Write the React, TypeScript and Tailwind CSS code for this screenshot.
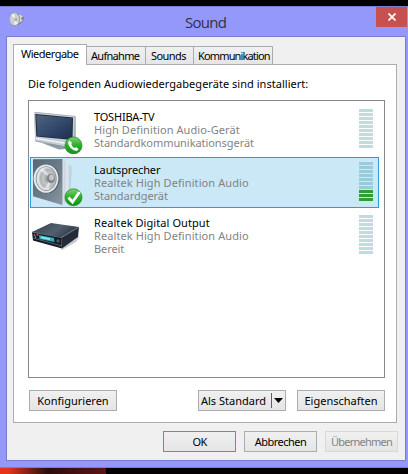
import React from 'react';

interface Device {
  name: string;
  description: string;
  status: string;
  spacing: string[];
  level: number;
  selected?: boolean;
  icon: React.ReactNode;
}

interface DialogButtonProps {
  className?: string;
  children: React.ReactNode;
}

const TitleIcon: React.FC = () => (
  <svg width="16" height="16" viewBox="0 0 16 16">
    <path d="M7 1.500 L13 3.500 L15 5.500 L14 9 L12 11 L8 13.500 Z" fill="#73777f" />
    <path d="M10 2.500 L14 4 L12 6.500 L14 8.500 L10 11 Z" fill="#dcdcde" />
    <path d="M12 6 L15 5.500 L13.500 9 Z" fill="#8d8f94" />
    <ellipse cx="5.700" cy="7.300" rx="5.500" ry="6.800" fill="#969a9c" />
    <ellipse cx="5.500" cy="7.200" rx="4.800" ry="6.100" fill="#cbd0ce" />
    <path d="M6 7 L2 3 L5 1.500 Z M6 7 L9 12 L5 13 Z" fill="#eef0ee" />
    <circle cx="6.800" cy="7.500" r="1.500" fill="#aab0ae" />
  </svg>
);

const TvIcon: React.FC = () => (
  <svg width="54" height="49" viewBox="0 0 54 49">
    <defs>
      <linearGradient id="screen" x1="0" y1="0" x2="1" y2="1">
        <stop offset="0" stopColor="#52647c" />
        <stop offset="0.5" stopColor="#324a6d" />
        <stop offset="1" stopColor="#1c2f50" />
      </linearGradient>
      <linearGradient id="call" x1="0" y1="0" x2="0" y2="1">
        <stop offset="0" stopColor="#7dd276" />
        <stop offset="0.5" stopColor="#29ae2b" />
        <stop offset="1" stopColor="#159314" />
      </linearGradient>
    </defs>
    <path d="M11 38 L34 40 L34 44 L28 44.500 Z" fill="#8e9ba7" />
    <path d="M3 7.500 L5 7 L44.700 11 L44.700 35 L38 41.500 L4.500 36 Z" fill="#9aa8b4" />
    <path d="M3 7.500 L43.700 11.500 L43 36 L36 42 L4 35.500 Z" fill="#c3cdd5" />
    <path d="M4.300 9 L42 12.500 L41.500 35 L5.300 31.500 Z" fill="#1e2a3a" />
    <path d="M5.300 10 L41 13.300 L40.500 34 L6.300 30.700 Z" fill="url(#screen)" />
    <path d="M5 33.500 L36 38.500" stroke="#eff3f6" strokeWidth="1.500" />
    <path d="M4.500 36 L34 42" stroke="#84929f" strokeWidth="0.800" />
    <circle cx="42.500" cy="40.500" r="8.500" fill="url(#call)" stroke="#168718" strokeWidth="0.700" />
    <path
      d="M38.500 35.500 L40.800 37.500 L40.300 39.500 Q41.500 42 43.500 43 L45.500 42.200 L47.500 44.200 Q46.500 46.500 43.500 45.500 Q38.500 43.500 37.200 38.500 Q37 36.500 38.500 35.500 Z"
      fill="#ffffff"
    />
  </svg>
);

const SpeakerIcon: React.FC = () => (
  <svg width="54" height="49" viewBox="0 0 54 49">
    <defs>
      <linearGradient id="cabinet" x1="0" y1="0" x2="1" y2="1">
        <stop offset="0" stopColor="#566876" />
        <stop offset="0.6" stopColor="#6f7f8c" />
        <stop offset="1" stopColor="#8c99a3" />
      </linearGradient>
      <linearGradient id="side" x1="0" y1="0" x2="1" y2="0">
        <stop offset="0" stopColor="#c3cfda" />
        <stop offset="0.5" stopColor="#dce6ee" />
        <stop offset="1" stopColor="#b4c6d6" />
      </linearGradient>
      <radialGradient id="cone" cx="0.6" cy="0.5">
        <stop offset="0" stopColor="#85898c" />
        <stop offset="0.5" stopColor="#c4c7c9" />
        <stop offset="0.8" stopColor="#adb3b6" />
        <stop offset="1" stopColor="#dfe2e3" />
      </radialGradient>
      <linearGradient id="check" x1="0" y1="0" x2="0" y2="1">
        <stop offset="0" stopColor="#7dd276" />
        <stop offset="0.5" stopColor="#29ae2b" />
        <stop offset="1" stopColor="#159314" />
      </linearGradient>
    </defs>
    <path d="M32 1 L40.500 9 L39.500 38 L32 47 Z" fill="url(#side)" />
    <path d="M2 1.300 L32 1 L32 47.300 L2 38.300 Z" fill="url(#cabinet)" />
    <path d="M32 1 L32 47" stroke="#e6edf2" strokeWidth="1" />
    <ellipse cx="15.500" cy="20.800" rx="13" ry="14.800" fill="#51606c" />
    <ellipse cx="15" cy="20.600" rx="12.400" ry="14.200" fill="#e6e9ea" />
    <ellipse cx="15.200" cy="20.600" rx="10.500" ry="12.300" fill="#8d9499" />
    <ellipse cx="15.200" cy="20.600" rx="9.700" ry="11.500" fill="url(#cone)" />
    <path d="M20 20 L8 12 L12 9.500 Z M20 20 L13 31.500 L18 31.500 Z" fill="#eceeee" opacity="0.7" />
    <ellipse cx="20" cy="20.500" rx="4" ry="4.700" fill="#7d8387" />
    <ellipse cx="20.500" cy="19.500" rx="2.500" ry="3" fill="#c3c6c8" />
    <circle cx="42.500" cy="39.300" r="8.500" fill="url(#check)" stroke="#168718" strokeWidth="0.700" />
    <path d="M37.500 39.500 L41.500 44 L48.500 34" fill="none" stroke="#ffffff" strokeWidth="2.800" />
  </svg>
);

const ReceiverIcon: React.FC = () => (
  <svg width="54" height="49" viewBox="0 0 54 49">
    <defs>
      <linearGradient id="lid" x1="0" y1="0" x2="1" y2="0.4">
        <stop offset="0" stopColor="#333c45" />
        <stop offset="0.6" stopColor="#526070" />
        <stop offset="1" stopColor="#303a45" />
      </linearGradient>
    </defs>
    <path d="M30 38 L49 25 L45 31 L31 39 Z" fill="#c5ccd1" />
    <path d="M1 21 L20 12 L48 16 L30 27 Z" fill="url(#lid)" />
    <path d="M30 27 L48 16 L47 26 L31 37.500 Z" fill="#232c36" />
    <path d="M1 21 L30 26 L31 37.500 L2 29.500 Z" fill="#141b22" />
    <path d="M1 21 L30 26.500 L48 16" fill="none" stroke="#748291" strokeWidth="0.700" />
    <path d="M2 27 L31 35" stroke="#75818b" strokeWidth="0.700" />
    <path d="M8 24 L23 27 L23.500 31 L8.500 28 Z" fill="#35abc0" />
    <path d="M10 25.500 L19 27.300 L19 29 L10 27.300 Z" fill="#8ae9ee" />
    <circle cx="6.500" cy="23.700" r="1.100" fill="#ed4440" />
    <circle cx="27" cy="30" r="1.700" fill="#4e5a64" />
    <path d="M3 23 L5 27" stroke="#8b969e" strokeWidth="1" />
  </svg>
);

const devices: Device[] = [
  {
    name: 'TOSHIBA-TV',
    description: 'High Definition Audio-Gerät',
    status: 'Standardkommunikationsgerät',
    spacing: ['tracking-[-0.2px]', 'tracking-[0.09px]', 'tracking-[-0.06px]'],
    level: 0,
    icon: <TvIcon />,
  },
  {
    name: 'Lautsprecher',
    description: 'Realtek High Definition Audio',
    status: 'Standardgerät',
    spacing: ['tracking-[-0.15px]', 'tracking-[0.09px]', 'tracking-[-0.04px]'],
    level: 3,
    selected: true,
    icon: <SpeakerIcon />,
  },
  {
    name: 'Realtek Digital Output',
    description: 'Realtek High Definition Audio',
    status: 'Bereit',
    spacing: ['tracking-[0.07px]', 'tracking-[0.09px]', 'tracking-[-0.1px]'],
    level: 0,
    icon: <ReceiverIcon />,
  },
];

const LevelMeter: React.FC<{ level: number; selected?: boolean }> = ({ level, selected }) => {
  const idle = selected ? 'bg-[#9bcadb]' : 'bg-[#c0dce2]';
  return (
    <div className="flex flex-col gap-px w-3.5 mt-1">
      {Array.from({ length: 10 }, (_, i) => (
        <div key={i} className={`h-[3px] ${i >= 10 - level ? 'bg-[#2f9e35]' : idle}`}></div>
      ))}
    </div>
  );
};

const DeviceRow: React.FC<{ device: Device }> = ({ device }) => (
  <div
    className={`flex h-[51px] w-[349px] shrink-0 border pr-[5px] ${
      device.selected ? 'border-[#26a0da] bg-[#cbe8f6]' : 'border-transparent'
    }`}
  >
    {device.icon}
    <div className="flex flex-col flex-1 pl-[9px] pt-[5px] leading-[13px] text-[#838383]">
      <p className={`text-black ${device.spacing[0]}`}>{device.name}</p>
      <p className={device.spacing[1]}>{device.description}</p>
      <p className={device.spacing[2]}>{device.status}</p>
    </div>
    <LevelMeter level={device.level} selected={device.selected} />
  </div>
);

const DialogButton: React.FC<DialogButtonProps> = ({ className = '', children }) => (
  <button
    className={`flex h-[21px] items-center justify-center border bg-linear-to-b from-[#f0f0f0] to-[#e5e5e5] ${className}`}
  >
    {children}
  </button>
);

const App: React.FC = () => {
  return (
    <div className="flex flex-col w-[408px] h-[474px] overflow-hidden bg-black font-['Noto_Sans','Open_Sans',sans-serif] text-[11px] leading-[13px] text-black whitespace-nowrap">
      <div className="h-1.5 shrink-0"></div>
      <div className="flex flex-col h-[462px] shrink-0 border-y border-[#7a7cd0] bg-[#9598fb] pl-1.5 pr-0.5">
        <div className="flex h-[29px] shrink-0">
          <div className="w-[30px] pl-[3px] pt-[5px]">
            <TitleIcon />
          </div>
          <h1 className="flex-1 pl-[149px] pt-[5px] font-['Open_Sans','Noto_Sans',sans-serif] text-[15px] leading-5 tracking-[-0.7px] text-[#2f3047]">
            Sound
          </h1>
          <button className="flex h-5 w-[31px] items-center justify-center bg-[#c75050] -mr-px">
            <svg width="8" height="8" viewBox="0 0 8 8">
              <path d="M0.500 0.500 L7.500 7.500 M7.500 0.500 L0.500 7.500" stroke="#ffffff" strokeWidth="1.700" />
            </svg>
          </button>
        </div>

        <div className="flex flex-col w-[400px] h-[425px] shrink-0 border border-[#7a7cd0] bg-[#f0f0f0] pl-1.5 pt-[7px]">
          <div className="flex items-end h-5 shrink-0">
            <div className="relative h-[21px] w-[74px] border border-b-0 border-[#acacac] bg-white pl-[7px] pt-[2px] -mb-px tracking-[-0.5px]">
              Wiedergabe
            </div>
            <div className="h-[18px] w-[59px] border border-b-0 border-l-0 border-[#acacac] bg-linear-to-b from-[#f0f0f0] to-[#e5e5e5] pl-1 pt-[2px] tracking-[-0.7px]">
              Aufnahme
            </div>
            <div className="h-[18px] w-[48px] border border-b-0 border-l-0 border-[#acacac] bg-linear-to-b from-[#f0f0f0] to-[#e5e5e5] pl-[5px] pt-[2px] tracking-[-0.55px]">
              Sounds
            </div>
            <div className="h-[18px] w-[79px] border border-b-0 border-l-0 border-[#acacac] bg-linear-to-b from-[#f0f0f0] to-[#e5e5e5] pl-1 pt-[2px] tracking-[-0.85px]">
              Kommunikation
            </div>
          </div>

          <div className="flex flex-col w-[384px] h-[359px] shrink-0 border border-[#acacac] bg-white px-3.5">
            <p className="h-[35px] shrink-0 pt-3 tracking-[0.03px]">
              Die folgenden Audiowiedergabegeräte sind installiert:
            </p>
            <div className="flex flex-col gap-0.5 w-[357px] h-[278px] shrink-0 border border-[#828790] pl-px pt-[3px]">
              {devices.map((device) => (
                <DeviceRow key={device.name} device={device} />
              ))}
            </div>
            <div className="flex pt-3 pl-px w-[357px]">
              <DialogButton className="w-[88px] border-[#acacac]">Konfigurieren</DialogButton>
              <DialogButton className="w-[88px] border-[#acacac] ml-[81px]">
                <span>Als Standard</span>
                <span className="h-[15px] w-px bg-[#606060] ml-[5px]"></span>
                <svg width="9" height="5" viewBox="0 0 9 5" className="ml-0.5">
                  <path d="M0 0 H9 L4.500 5 Z" fill="#000000" />
                </svg>
              </DialogButton>
              <DialogButton className="w-[88px] border-[#acacac] ml-[11px]">Eigenschaften</DialogButton>
            </div>
          </div>

          <div className="flex gap-2 pt-2 pl-[150px]">
            <DialogButton className="w-[73px] border-[#3399ff] tracking-[-0.6px]">OK</DialogButton>
            <DialogButton className="w-[73px] border-[#acacac] tracking-[-0.5px]">Abbrechen</DialogButton>
            <DialogButton className="w-[73px] border-[#d9d9d9] text-[#838383] tracking-[-0.75px]">Übernehmen</DialogButton>
          </div>
        </div>
      </div>
      <div className="h-1.5 w-[106px] bg-linear-to-r from-[#e8321a] from-8% via-[#2a0d0b] via-45% to-[#5e1214]"></div>
    </div>
  );
};

export default App;
